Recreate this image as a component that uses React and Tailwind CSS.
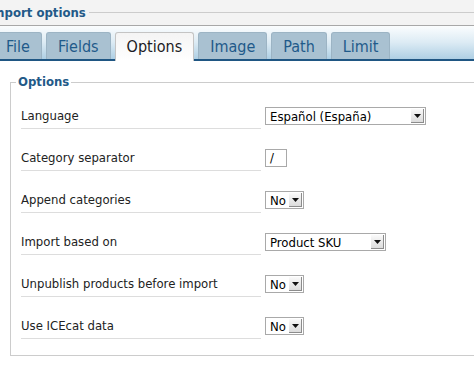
import React from 'react';

const tabs = ['File', 'Fields', 'Options', 'Image', 'Path', 'Limit'];

const rows = [
  { label: 'Language', control: { type: 'select', value: 'Español (España)', width: 'w-[161px]' } },
  { label: 'Category separator', control: { type: 'input', value: '/' } },
  { label: 'Append categories', control: { type: 'select', value: 'No', width: 'w-[39px]' } },
  { label: 'Import based on', control: { type: 'select', value: 'Product SKU', width: 'w-[121px]' } },
  { label: 'Unpublish products before import', control: { type: 'select', value: 'No', width: 'w-[39px]' } },
  { label: 'Use ICEcat data', control: { type: 'select', value: 'No', width: 'w-[39px]' } },
];

const Select = ({ value, width }) => (
  <div className={`${width} h-[18px] border border-[#a9a9a9] bg-white flex items-center justify-between`}>
    <span className="pl-[4px] text-[13px] leading-none text-black whitespace-nowrap">{value}</span>
    <span className="w-[13px] h-[14px] mr-[1px] flex items-center justify-center bg-gradient-to-b from-[#fafafa] to-[#dcdcdc] border-r border-b border-[#8c8c8c]">
      <svg width="7" height="4" viewBox="0 0 7 4">
        <path d="M0 0 L7 0 L3.5 4 Z" fill="#111" />
      </svg>
    </span>
  </div>
);

const App = () => {
  return (
    <div
      className="w-[474px] h-[379px] overflow-hidden bg-white"
      style={{ fontFamily: '"DejaVu Sans Condensed", "DejaVu Sans", "Liberation Sans", sans-serif' }}
    >
      {/* title bar */}
      <div className="h-[26px] bg-[#f3f3f3] border-b border-[#a8a8a8] flex items-center">
        <span className="-ml-[12px] text-[13px] font-bold text-[#235a88] whitespace-nowrap">Import options</span>
        <span className="flex-1 ml-[3px] h-px bg-[#cccccc]"></span>
      </div>

      {/* tabs */}
      <div className="h-[35px] flex items-end gap-[4px] -ml-[6px] border-b-2 border-[#1f5683] bg-gradient-to-b from-[#fbfdfe] via-[#dcebf4] to-[#aecfe4]">
        {tabs.map((tab) =>
          tab === 'Options' ? (
            <div
              key={tab}
              className="h-[29px] -mb-[2px] px-[11px] pt-[3px] bg-gradient-to-b from-[#f4f4f4] to-white border border-b-0 border-[#c4c4c4] rounded-t-[3px] text-[16px] leading-[22px] text-[#1b1b24]"
            >
              {tab}
            </div>
          ) : (
            <div
              key={tab}
              className="h-[27px] px-[11px] pt-[3px] bg-[#a9c1d1] border border-b-0 border-[#9cb4c4] rounded-t-[3px] text-[16px] leading-[22px] text-[#1f5a8a]"
            >
              {tab}
            </div>
          )
        )}
      </div>

      {/* fieldset */}
      <fieldset className="ml-[10px] mt-[16px] w-[480px] border border-[#cccccc] pl-[10px] pb-[16px]">
        <legend className="-ml-[5px] px-[2px] text-[13px] leading-[10px] font-bold text-[#235a88]">Options</legend>
        <div>
          {rows.map((row) => (
            <div key={row.label} className="flex h-[42px]">
              <div className="w-[240px] h-[42px] border-b border-[#dddddd] flex items-end pb-[4px] text-[13px] leading-[16px] text-[#222222]">
                {row.label}
              </div>
              <div className="ml-[4px] pt-[20px]">
                {row.control.type === 'select' ? (
                  <Select value={row.control.value} width={row.control.width} />
                ) : (
                  <div className="w-[22px] h-[18px] border border-[#a9a9a9] pl-[4px] text-[13px] leading-[16px] text-black">
                    {row.control.value}
                  </div>
                )}
              </div>
            </div>
          ))}
        </div>
      </fieldset>
    </div>
  );
};

export default App;
